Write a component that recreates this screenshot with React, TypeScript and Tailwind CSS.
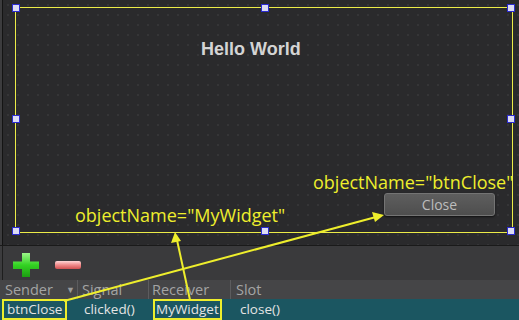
import React from "react";

const Y = "#eeee2c";

function Handle({ x, y }: { x: number; y: number }) {
  return (
    <div
      className="absolute w-[8px] h-[8px] bg-[#dcdcf4] border border-[#2b2bd0]"
      style={{ left: x - 4, top: y - 4 }}
    />
  );
}

export default function App() {
  const handles = [
    [16, 8], [265, 8], [511, 8],
    [16, 119], [511, 119],
    [16, 231], [265, 231], [511, 231],
  ];
  return (
    <div
      className="relative w-[519px] h-[320px] overflow-hidden bg-[#2b2b2d] flex flex-col"
      style={{ fontFamily: '"Open Sans", "Noto Sans", sans-serif' }}
    >
      {/* designer canvas */}
      <div className="flex h-[246px] border-b border-[#1a1a1a]">
        <div className="w-[2px] bg-[#3c3c3e]" />
        <div className="w-[1px] bg-[#141414]" />
        <div className="relative flex-1 bg-[#2a2a2c] bg-[radial-gradient(#353537_1px,transparent_1px)] bg-[length:10px_10px]">
          <div className="absolute left-[12px] top-[7px] w-[498px] h-[226px] border-[1.5px] border-[#ecec48]" />
          <div className="absolute left-[198px] top-[36px] text-[18px] font-bold text-[#d4d4d4]" style={{ fontFamily: '"Liberation Sans", Arial, sans-serif' }}>
            Hello World
          </div>
          <div className="absolute left-[310px] top-[171px] text-[18px] leading-[22px] text-[#eeee2c]">
            objectName="btnClose"
          </div>
          <div className="absolute left-[381px] top-[193px] w-[111px] h-[23px] rounded-[3px] border border-[#747474] bg-[linear-gradient(#5e5e5e,#4e4e4e)] flex items-center justify-center text-[14px] text-[#bdbdbd] shadow-[0_1px_2px_rgba(0,0,0,0.6)]">
            Close
          </div>
          <div className="absolute left-[72px] top-[204px] text-[18px] leading-[22px] text-[#eeee2c]">
            objectName="MyWidget"
          </div>
        </div>
      </div>
      {handles.map(([x, y], i) => (
        <Handle key={i} x={x} y={y} />
      ))}
      {/* toolbar */}
      <div className="flex h-[34px] bg-[#3a3a3c]">
        <div className="w-[2px] bg-[#3c3c3e]" />
        <div className="w-[1px] bg-[#1e1e1e]" />
        <div className="flex items-center gap-[14px] pl-[9px] pt-[3px]">
          <svg width="28" height="26" viewBox="0 0 28 26">
            <defs>
              <linearGradient id="g" x1="0" y1="0" x2="0" y2="1">
                <stop offset="0" stopColor="#9cf58a" />
                <stop offset="0.5" stopColor="#33d322" />
                <stop offset="1" stopColor="#1c9c12" />
              </linearGradient>
            </defs>
            <path d="M10 1h8v8.5h9v7.5h-9v8h-8v-8h-9v-7.5h9z" fill="url(#g)" />
          </svg>
          <svg width="28" height="10" viewBox="0 0 28 10">
            <defs>
              <linearGradient id="r" x1="0" y1="0" x2="0" y2="1">
                <stop offset="0" stopColor="#ffd6d6" />
                <stop offset="0.5" stopColor="#f08a8a" />
                <stop offset="1" stopColor="#d05050" />
              </linearGradient>
            </defs>
            <rect x="1" y="1" width="26" height="8" rx="2" fill="url(#r)" />
          </svg>
        </div>
      </div>
      {/* header */}
      <div className="flex h-[19px] bg-[#454547] text-[14.5px] leading-[19px] text-[#a4a4a4]">
        <div className="w-[78px] pl-[5px] flex items-center justify-between pr-[2px] border-r border-[#5c5c5e]">
          <span>Sender</span>
          <span className="text-[9px] text-[#9a9a9a]">▼</span>
        </div>
        <div className="w-[71px] pl-[4px] border-r border-[#5c5c5e]">Signal</div>
        <div className="w-[82px] pl-[3px] border-r border-[#5c5c5e]">Receiver</div>
        <div className="flex-1 pl-[5px]">Slot</div>
      </div>
      {/* row */}
      <div className="flex h-[21px] bg-[#1b5661] text-[13.5px] leading-[17px] text-[#e4e4e4] items-center">
        <div className="w-[78px] pl-[2px]">
          <span className="inline-block border-2 border-[#eeee2c] px-[3px]">btnClose</span>
        </div>
        <div className="w-[71px] pl-[6px]">clicked()</div>
        <div className="w-[86px] pl-[4px]">
          <span className="inline-block border-2 border-[#eeee2c] px-[1px]">MyWidget</span>
        </div>
        <div className="flex-1 pl-[5px]">close()</div>
      </div>
      {/* arrows */}
      <svg className="absolute left-0 top-0 pointer-events-none" width="519" height="320">
        <line x1="64" y1="301" x2="376" y2="217" stroke={Y} strokeWidth="2" />
        <polygon points="384,215 372,212 375,222" fill={Y} />
        <line x1="190" y1="300" x2="177" y2="240" stroke={Y} strokeWidth="2" />
        <polygon points="175,232 171,243 181,241" fill={Y} />
      </svg>
    </div>
  );
}
